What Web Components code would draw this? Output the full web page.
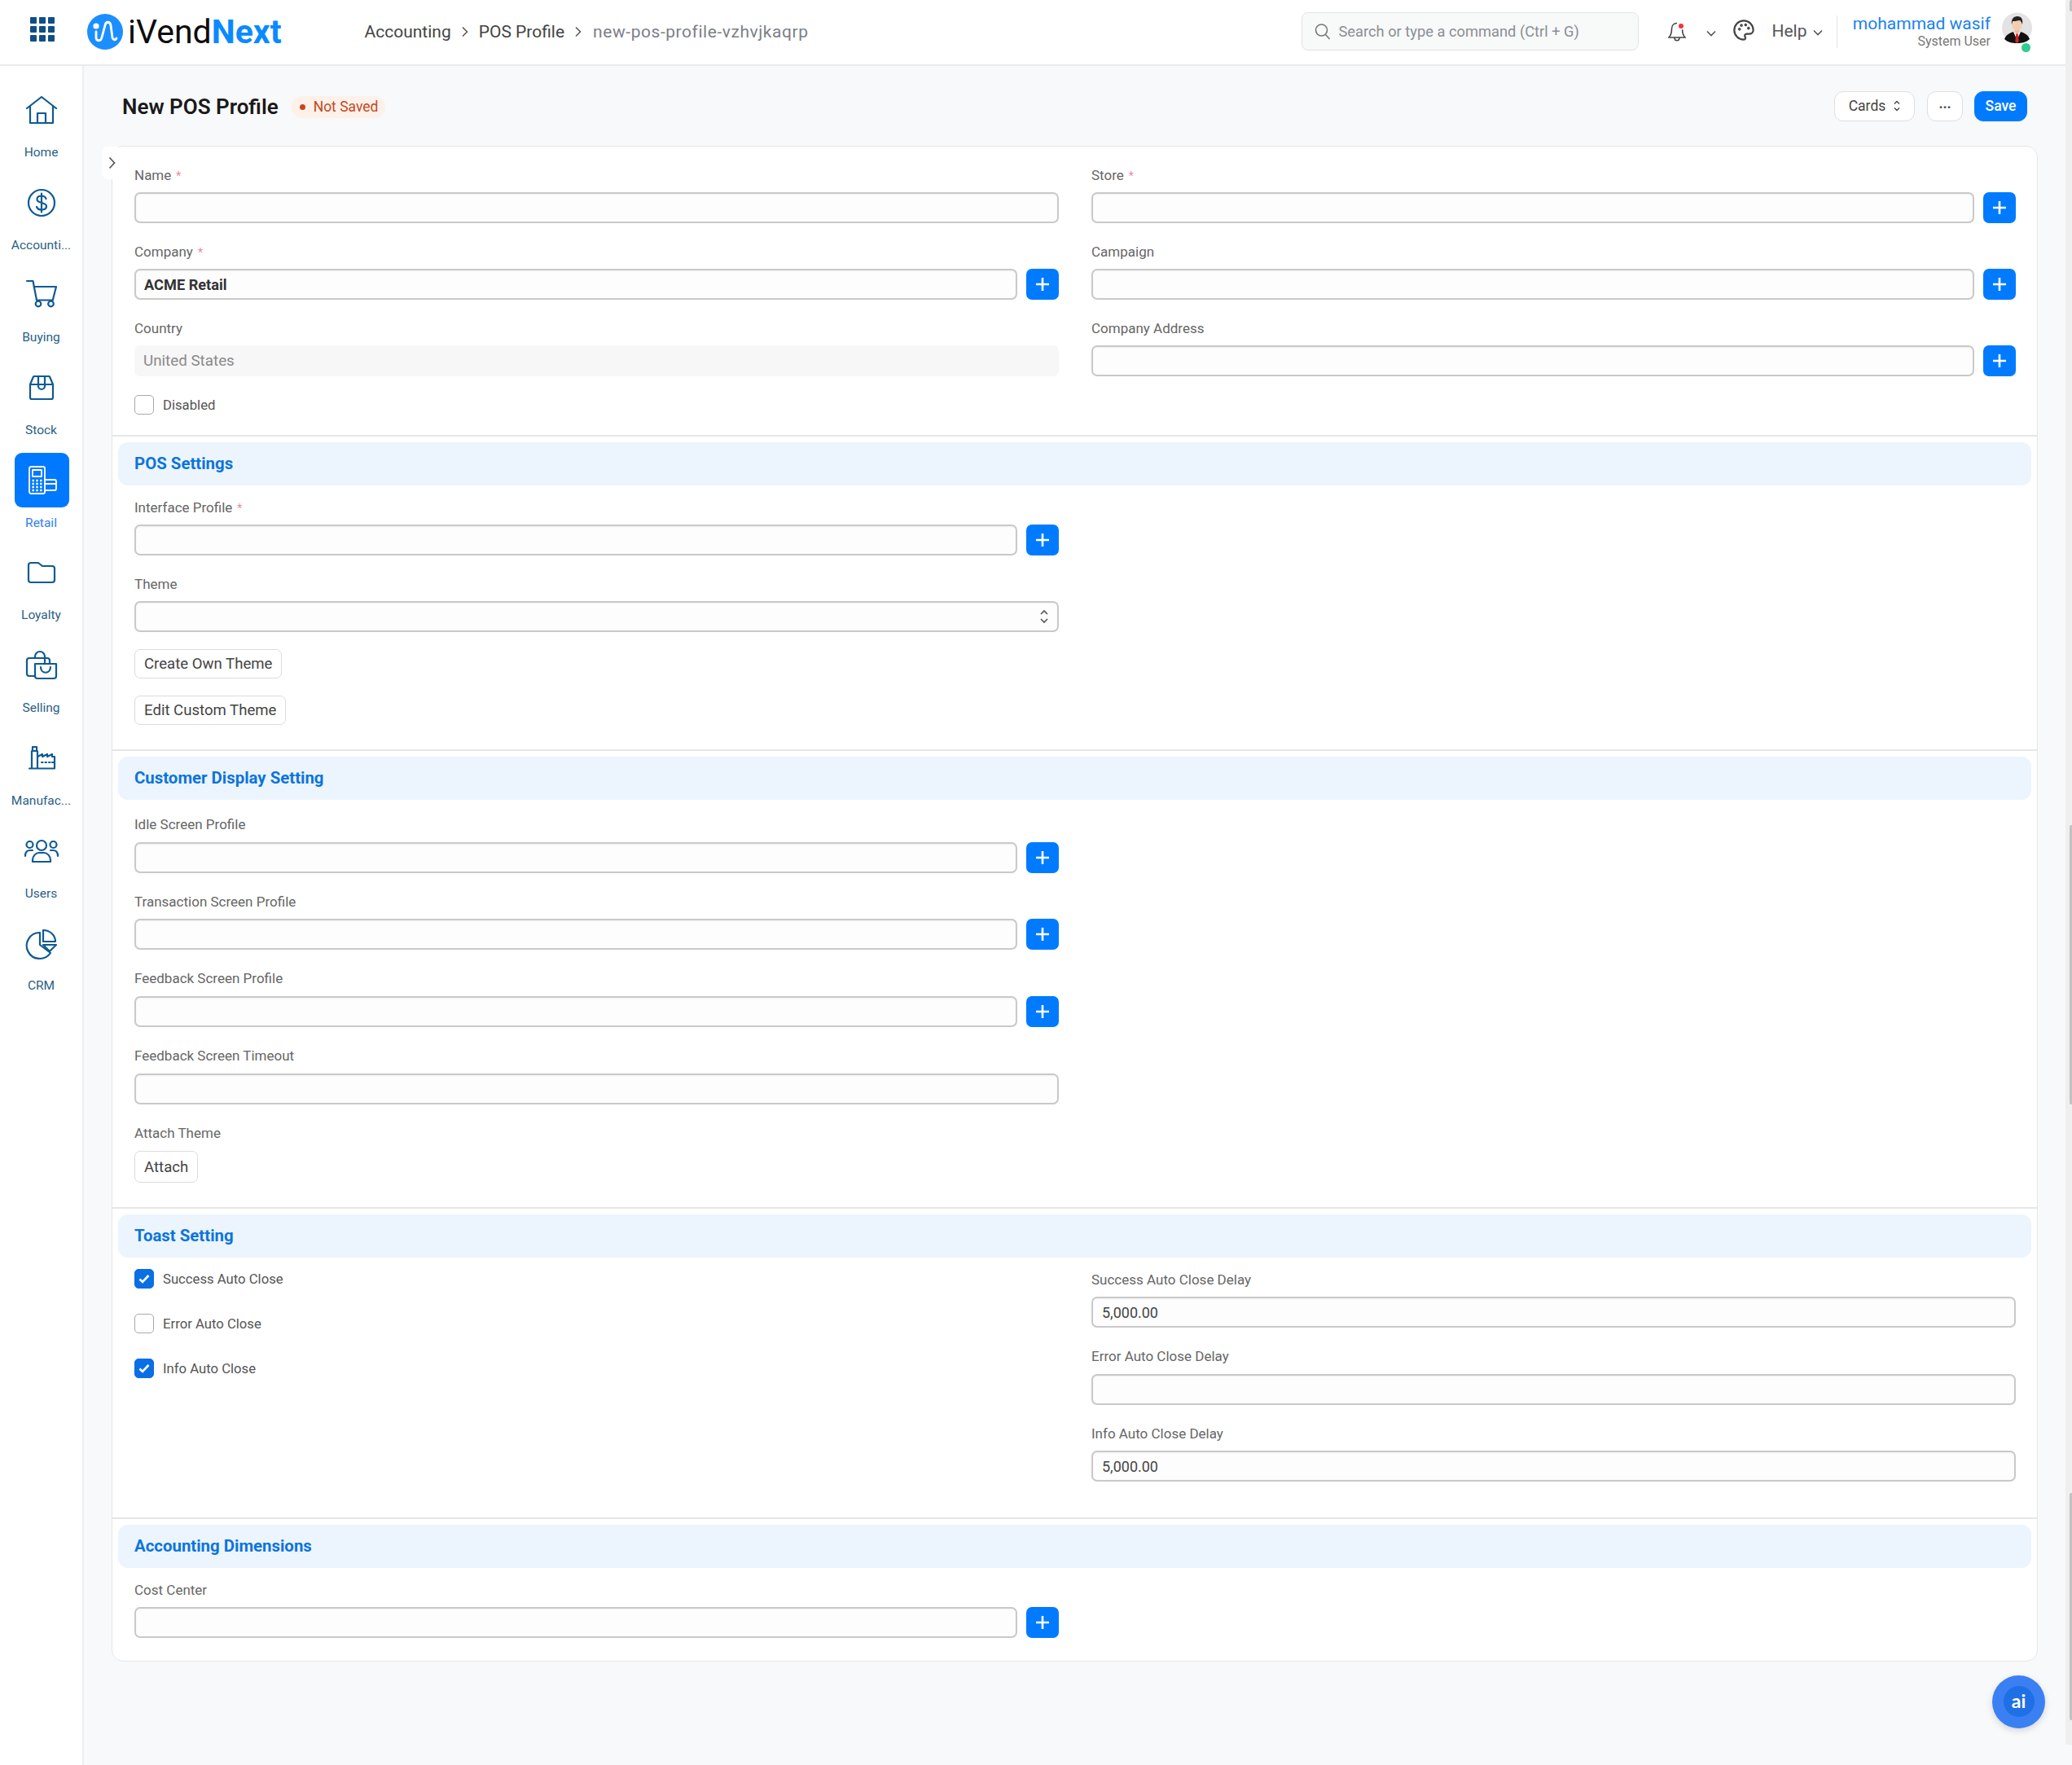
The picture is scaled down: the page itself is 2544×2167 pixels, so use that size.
<!DOCTYPE html>
<html lang="en">
<head>
<meta charset="utf-8">
<title>New POS Profile</title>
<style>
html, body { margin: 0; height: 2167px; overflow: hidden; background: #f8f9fb; }
body { font-family: Roboto, "Liberation Sans", sans-serif; display: flex; }
#app { width: 2536px; display: flex; flex-direction: column; }
#below { display: flex; flex: 1; min-height: 0; }
</style>
</head>
<body>
<div id="app">
  <iv-topbar></iv-topbar>
  <div id="below">
    <iv-sidebar>
      <iv-side-item label="Home"><svg viewBox="0 0 44 44"><path d="M4 20 22 6l18 14M8 17v21h28V17M17 38V26h10v12"/></svg></iv-side-item>
      <iv-side-item label="Accounti..."><svg viewBox="0 0 44 44"><circle cx="22" cy="22" r="16"/><path d="M27.5 17c-1-2.500-3-3.500-5.500-3.500-3 0-5.500 1.500-5.500 4.300 0 5.700 11.500 2.700 11.500 8.500 0 2.800-2.700 4.200-6 4.200-2.700 0-5-1-6-3.500M22 10.500v23"/></svg></iv-side-item>
      <iv-side-item label="Buying"><svg viewBox="0 0 44 44"><path d="M4 5h7.500L16 28.500h20M12.500 12H40l-4 15.500"/><circle cx="18" cy="33" r="3.300"/><circle cx="33.500" cy="33" r="3.300"/></svg></iv-side-item>
      <iv-side-item label="Stock"><svg viewBox="0 0 44 44"><path d="M8 18l4-9.500a1 1 0 0 1 1-.5h18a1 1 0 0 1 1 .5L36 18v16a2 2 0 0 1-2 2H10a2 2 0 0 1-2-2zM8 18h28M18 8v12a4 4 0 0 0 8 0V8"/></svg></iv-side-item>
      <iv-side-item label="Retail" active><svg viewBox="0 0 44 44"><path d="M9 5h15a2 2 0 0 1 2 2v29a2 2 0 0 1-2 2H9a2 2 0 0 1-2-2V7a2 2 0 0 1 2-2zM11 9h11v8H11z"/><path d="M10.500 22h12M10.500 26h12M10.500 30h12M10.500 34h12" stroke-width="2.400" stroke-dasharray="2.400 2.400" stroke-linecap="butt"/><path d="M26 21h12a2 2 0 0 1 2 2v9a2 2 0 0 1-2 2H26M26 26h14"/></svg></iv-side-item>
      <iv-side-item label="Loyalty"><svg viewBox="0 0 44 44"><path d="M6 13a3 3 0 0 1 3-3h9l5 4h12a3 3 0 0 1 3 3v14a3 3 0 0 1-3 3H9a3 3 0 0 1-3-3z"/></svg></iv-side-item>
      <iv-side-item label="Selling"><svg viewBox="0 0 44 44"><path d="M13 35H7a3 3 0 0 1-3-3V16a3 3 0 0 1 3-3h22a3 3 0 0 1 3 3v3M14 13V11a6 6 0 0 1 12 0v8"/><path d="M14 20h26v15a3 3 0 0 1-3 3H17a3 3 0 0 1-3-3zM21 24c0 9 12 9 12 0"/></svg></iv-side-item>
      <iv-side-item label="Manufac..."><svg viewBox="0 0 44 44"><path d="M7 34.500h31M10 34V13h7v21M11 8h5v5h-5zM17 20l6-3v3l6-3v3l6-3v3h3v14M22 27h1.500M26.500 27H28M31 27h1.500M35 27h1.500"/></svg></iv-side-item>
      <iv-side-item label="Users"><svg viewBox="0 0 44 44"><circle cx="22" cy="15" r="6"/><circle cx="7.500" cy="14" r="4"/><circle cx="36.500" cy="14" r="4"/><path d="M11 35v-2c0-5 4-9 8-9h6c4 0 8 4 8 9v2zM2 28c0-4 2-7 6-7h3M42 28c0-4-2-7-6-7h-3"/></svg></iv-side-item>
      <iv-side-item label="CRM"><svg viewBox="0 0 44 44"><path d="M20 9A16 16 0 1 0 33 34L20 24z"/><path d="M24 6c8 0 15 6 15 14H24zM24 24h16l-8 8z"/></svg></iv-side-item>
    </iv-sidebar>
    <iv-main>
      <iv-page-head title="New POS Profile" status="Not Saved"></iv-page-head>
      <iv-form-card>
        <iv-section plain style="--pt:25px;--pb:24.500px">
          <iv-col>
            <iv-field label="Name" required></iv-field>
            <iv-field label="Company" required value="ACME Retail" bold link></iv-field>
            <iv-field label="Country" value="United States" disabled></iv-field>
            <iv-check label="Disabled" style="margin-top:-1.500px"></iv-check>
          </iv-col>
          <iv-col>
            <iv-field label="Store" required link></iv-field>
            <iv-field label="Campaign" link></iv-field>
            <iv-field label="Company Address" link></iv-field>
          </iv-col>
        </iv-section>
        <iv-section title="POS Settings" style="--pt:17px;--pb:30px">
          <iv-col>
            <iv-field label="Interface Profile" required link></iv-field>
            <iv-field label="Theme" select></iv-field>
            <iv-btn style="margin-top:-3.500px">Create Own Theme</iv-btn>
            <iv-btn style="margin-top:21px">Edit Custom Theme</iv-btn>
          </iv-col>
          <iv-col></iv-col>
        </iv-section>
        <iv-section title="Customer Display Setting" style="--pt:20px;--pb:29.500px;--fb:25.200px">
          <iv-col>
            <iv-field label="Idle Screen Profile" link></iv-field>
            <iv-field label="Transaction Screen Profile" link></iv-field>
            <iv-field label="Feedback Screen Profile" link></iv-field>
            <iv-field label="Feedback Screen Timeout"></iv-field>
            <iv-field-label>Attach Theme</iv-field-label>
            <iv-btn style="--h:39px;margin-top:1px">Attach</iv-btn>
          </iv-col>
          <iv-col></iv-col>
        </iv-section>
        <iv-section title="Toast Setting" style="--pt:17px;--pb:19px;--fb:25px">
          <iv-col style="gap:31px">
            <iv-check label="Success Auto Close" checked style="margin-top:-2.500px"></iv-check>
            <iv-check label="Error Auto Close"></iv-check>
            <iv-check label="Info Auto Close" checked></iv-check>
          </iv-col>
          <iv-col>
            <iv-field label="Success Auto Close Delay" value="5,000.00"></iv-field>
            <iv-field label="Error Auto Close Delay"></iv-field>
            <iv-field label="Info Auto Close Delay" value="5,000.00"></iv-field>
          </iv-col>
        </iv-section>
        <iv-section title="Accounting Dimensions" style="--pt:16.500px;--pb:3px">
          <iv-col>
            <iv-field label="Cost Center" link></iv-field>
          </iv-col>
          <iv-col></iv-col>
        </iv-section>
      </iv-form-card>
      <iv-fab></iv-fab>
    </iv-main>
  </div>
</div>
<iv-scrollbar></iv-scrollbar>

<script>
class IvTopbar extends HTMLElement {
    constructor() {
        super();
        this.attachShadow({ mode: 'open' });
        this.shadowRoot.innerHTML = `
            <style>
            :host { display: flex; align-items: center; height: 79px; flex: none; background: #fff; border-bottom: 2px solid #e9eaec; padding: 0 41px 0 37px; color: #444; }
            svg { display: block; flex: none; }
            .grid { display: grid; grid-template-columns: repeat(3, 8px); gap: 3px; margin-top: -7px; }
            .grid i { width: 8px; height: 8px; background: #0f4f86; border-radius: 1px; }
            .logo { display: flex; align-items: center; margin-left: 40px; font-size: 41px; line-height: 44px; color: #0d0d0d; margin-top: -2px; }
            .logo span { margin-left: 6px; }
            .logo b { color: #0a8aff; font-weight: 700; }
            .crumbs { display: flex; align-items: center; margin-left: 102px; font-size: 21px; color: #444; margin-top: -1px; }
            .crumbs svg { margin: 0 13px; }
            .crumbs .last { color: #7b8087; letter-spacing: .55px; margin-left: 1px; }
            .search { margin-left: auto; width: 414px; height: 47px; box-sizing: border-box; border: 1.5px solid #e3e4e5; border-radius: 8px; background: #f8f9f9; display: flex; align-items: center; padding-left: 15px; font-size: 18.300px; color: #8a8f94; margin-top: -2px; }
            .search svg { margin-right: 10px; }
            .help { width: 42px; margin-left: 20.500px; font-size: 21px; color: #555; margin-top: -4px; }
            .sep { width: 1.5px; height: 40px; background: #e4e4e4; margin-left: 17px; margin-top: -2px; }
            .user { width: 170px; margin-left: 18px; text-align: right; margin-top: -2px; }
            .user div { font-size: 21px; line-height: 24px; color: #1a82f0; white-space: nowrap; }
            .user small { display: block; font-size: 16px; line-height: 20px; color: #777; white-space: nowrap; }
            .avatar { position: relative; margin-left: 14px; width: 37px; height: 38px; margin-top: -12px; }
            .avatar i { position: absolute; right: 2px; bottom: -11px; width: 11px; height: 11px; border-radius: 50%; background: #2ecc8f; }
            </style>
            <div class="grid"><i></i><i></i><i></i><i></i><i></i><i></i><i></i><i></i><i></i></div>
            <div class="logo">
                <svg width="44" height="44" viewBox="0 0 44 44"><circle cx="22" cy="22" r="22" fill="#1b8fff"/><circle cx="11" cy="15" r="3.600" fill="#fff"/><path d="M11 22v7c0 5 6 5 7 0l4-15c1-5 6-5 7 0l2 15c1 4 4 3 5 1" fill="none" stroke="#fff" stroke-width="2.800" stroke-linecap="round"/></svg>
                <span>iVend<b>Next</b></span>
            </div>
            <div class="crumbs">
                <span>Accounting</span>
                <svg width="8" height="14" viewBox="0 0 8 14"><path d="M1 1.500 6.500 7 1 12.500" fill="none" stroke="#555" stroke-width="1.500"/></svg>
                <span>POS Profile</span>
                <svg width="8" height="14" viewBox="0 0 8 14"><path d="M1 1.500 6.500 7 1 12.500" fill="none" stroke="#555" stroke-width="1.500"/></svg>
                <span class="last">new-pos-profile-vzhvjkaqrp</span>
            </div>
            <div class="search">
                <svg width="20" height="22" viewBox="0 0 20 22"><circle cx="8.500" cy="9" r="7" fill="none" stroke="#777" stroke-width="1.600"/><path d="M13.500 14.500 18.500 20" stroke="#777" stroke-width="1.600"/></svg>
                <span>Search or type a command (Ctrl + G)</span>
            </div>
            <svg style="margin-left:36.500px;margin-top:-2px" width="22" height="24" viewBox="0 0 22 24"><path d="M11 1.500c-4 0-6.500 3-6.500 7 0 6-2 9-3.500 10.500h20c-1.500-1.500-3.500-4.500-3.500-10.500M8 19c0 5 6 5 6 0" fill="none" stroke="#444" stroke-width="1.600"/><circle cx="16" cy="5" r="4.500" fill="#fff"/><circle cx="16" cy="5" r="3" fill="#f0353b"/></svg>
            <svg style="margin-left:25px;margin-top:2px" width="12" height="8" viewBox="0 0 12 8"><path d="M1 1.500 6 6.500 11 1.500" fill="none" stroke="#555" stroke-width="1.600"/></svg>
            <svg style="margin-left:20px;margin-top:-6px" width="28" height="28" viewBox="0 0 24 24" fill="none" stroke="#444" stroke-width="1.900"><path d="M12 22a10 10 0 1 1 10-10c0 2.500-2 4-4.500 4H15a2 2 0 0 0-1.500 3.300c.6.700.3 2.700-1.500 2.700z"/><circle cx="7.500" cy="11" r=".6" fill="#444"/><circle cx="9.500" cy="7" r=".6" fill="#444"/><circle cx="14" cy="6.500" r=".6" fill="#444"/><circle cx="17" cy="10" r=".6" fill="#444"/></svg>
            <div class="help">Help</div>
            <svg style="margin-left:8px;margin-top:1px" width="12" height="8" viewBox="0 0 12 8"><path d="M1 1.500 6 6.500 11 1.500" fill="none" stroke="#555" stroke-width="1.600"/></svg>
            <div class="sep"></div>
            <div class="user"><div>mohammad wasif</div><small>System User</small></div>
            <div class="avatar">
                <svg width="37" height="38" viewBox="0 0 37 38"><circle cx="18.500" cy="19" r="18.500" fill="#e3e3e3"/><path d="M3 33c2-6 8-8 11-9h9c3 1 9 3 11 9-4 4-9 5-15.500 5S7 37 3 33z" fill="#111"/><path d="M14 24l4.500 10 4.500-10z" fill="#fff"/><path d="M17.300 26h2.400l1 10-2.200 2-2.200-2z" fill="#d8232a"/><path d="M15.500 20h6v5l-3 2-3-2z" fill="#eebd9c"/><ellipse cx="18.500" cy="15" rx="6" ry="7.500" fill="#f4cdb0"/><path d="M12 15c-1-6 2-10 7-10s7 4 6 10c-1-3-2-5-4-5-3 1-7 1-8 1z" fill="#222"/></svg>
                <i></i>
            </div>
            `;
    }
}

class IvSidebar extends HTMLElement {
    constructor() {
        super();
        this.attachShadow({ mode: 'open' });
        this.shadowRoot.innerHTML = `
            <style>
            :host { display: block; flex: none; width: 101px; background: #fff; border-right: 2px solid #eceef0; padding-top: 32px; }
            </style>
            <slot></slot>
            `;
    }
}

class IvSideItem extends HTMLElement {
    constructor() {
        super();
        this.attachShadow({ mode: 'open' });
        this.shadowRoot.innerHTML = `
            <style>
            :host { display: flex; flex-direction: column; align-items: center; height: 113.700px; color: #2b5f86; }
            .icon { width: 67px; height: 44px; display: flex; align-items: center; justify-content: center; border-radius: 9px; margin-left: 1px; }
            ::slotted(svg) { width: 44px; height: 44px; fill: none; stroke: #0f5a92; stroke-width: 2.200; stroke-linejoin: round; stroke-linecap: round; }
            :host([active]) { color: #2f80f0; }
            :host([active]) .icon { background: #0078ff; height: 67px; margin-top: -11.500px; margin-bottom: -11.500px; }
            :host([active]) ::slotted(svg) { stroke: #fff; stroke-width: 1.800; }
            .label { margin-top: 20px; font-size: 15.500px; line-height: 20px; white-space: nowrap; }
            </style>
            <div class="icon"><slot></slot></div>
            <div class="label"></div>
            `;
    }
    connectedCallback() {
        this.shadowRoot.querySelector('.label').textContent = this.getAttribute('label');
    }
}

class IvMain extends HTMLElement {
    constructor() {
        super();
        this.attachShadow({ mode: 'open' });
        this.shadowRoot.innerHTML = `
            <style>
            :host { display: block; flex: 1; position: relative; padding: 0 34px 0 34px; }
            </style>
            <slot></slot>
            `;
    }
}

class IvPageHead extends HTMLElement {
    constructor() {
        super();
        this.attachShadow({ mode: 'open' });
        this.shadowRoot.innerHTML = `
            <style>
            :host { display: flex; align-items: center; height: 100px; margin: 0 13px 0 13px; }
            h1 { margin: 0; font-size: 26px; font-weight: 600; color: #1a1a1a; white-space: nowrap; }
            .badge { display: flex; align-items: center; margin-left: 16px; height: 27px; padding: 0 9px 0 10px; border-radius: 13px; background: #fdf1ea; color: #c2491d; font-size: 17.500px; }
            .badge i { width: 7px; height: 7px; border-radius: 50%; background: #c2491d; margin-right: 10px; }
            .btn { display: flex; align-items: center; justify-content: center; height: 37px; box-sizing: border-box; margin-top: -2px; border: 1.500px solid #dfdfdf; border-radius: 11px; background: #fff; font-size: 17.500px; color: #444; }
            .cards { margin-left: auto; width: 99px; gap: 10px; }
            .more { margin-left: 15px; width: 44px; padding-bottom: 7px; font-weight: 700; }
            .save { margin-left: 14px; width: 65px; background: #007bff; border-color: #007bff; color: #fff; font-weight: 500; }
            </style>
            <h1></h1>
            <div class="badge"><i></i><span></span></div>
            <div class="btn cards">Cards <svg width="8" height="14" viewBox="0 0 8 14"><path d="M1 4.500 4 1.500 7 4.500M1 9.500 4 12.500 7 9.500" fill="none" stroke="#444" stroke-width="1.400"/></svg></div>
            <div class="btn more">...</div>
            <div class="btn save">Save</div>
            `;
    }
    connectedCallback() {
        this.shadowRoot.querySelector('h1').textContent = this.getAttribute('title');
        this.shadowRoot.querySelector('.badge span').textContent = this.getAttribute('status');
    }
}

class IvFormCard extends HTMLElement {
    constructor() {
        super();
        this.attachShadow({ mode: 'open' });
        this.shadowRoot.innerHTML = `
            <style>
            :host { display: block; position: relative; box-sizing: border-box; margin-top: -2.500px; background: #fff; border: 1.500px solid #e5e6e7; border-radius: 14px; }
            .tab { position: absolute; left: -13px; top: 0; width: 24px; height: 40px; background: #fff; border-radius: 8px; display: flex; align-items: center; justify-content: center; }
            </style>
            <div class="tab"><svg width="9" height="16" viewBox="0 0 9 16"><path d="M1.500 1.500 7.500 8 1.500 14.500" fill="none" stroke="#555" stroke-width="1.700"/></svg></div>
            <slot></slot>
            `;
    }
}

class IvSection extends HTMLElement {
    constructor() {
        super();
        this.attachShadow({ mode: 'open' });
        this.shadowRoot.innerHTML = `
            <style>
            :host { display: block; border-top: 2px solid #e5e6e7; }
            :host([plain]) { border-top: none; }
            :host([plain]) .head { display: none; }
            .head { margin: 7px 7px 0; height: 53px; line-height: 53px; padding-left: 20px; border-radius: 12px; background: #ecf5fd; color: #0c74dc; font-size: 20.400px; font-weight: 700; }
            .body { display: grid; grid-template-columns: 1fr 1fr; column-gap: 40px; padding: var(--pt, 17px) 26px var(--pb, 20px) 27px; }
            </style>
            <div class="head"></div>
            <div class="body"><slot></slot></div>
            `;
    }
    connectedCallback() {
        this.shadowRoot.querySelector('.head').textContent = this.getAttribute('title');
    }
}

class IvCol extends HTMLElement {
    constructor() {
        super();
        this.attachShadow({ mode: 'open' });
        this.shadowRoot.innerHTML = `
            <style>
            :host { display: flex; flex-direction: column; align-items: stretch; min-width: 0; }
            </style>
            <slot></slot>
            `;
    }
}

class IvFieldLabel extends HTMLElement {
    constructor() {
        super();
        this.attachShadow({ mode: 'open' });
        this.shadowRoot.innerHTML = `
            <style>
            :host { display: block; height: 22px; line-height: 20.500px; margin-bottom: 9.500px; font-size: 17px; color: #666; white-space: nowrap; }
            </style>
            <slot></slot>
            `;
    }
}

class IvField extends HTMLElement {
    constructor() {
        super();
        this.attachShadow({ mode: 'open' });
        this.shadowRoot.innerHTML = `
            <style>
            :host { display: block; margin-bottom: var(--fb, 24.500px); }
            .required { color: #ee8a9a; margin-left: 6px; font-size: 14px; }
            .row { display: flex; gap: 11px; }
            .input { flex: 1; min-width: 0; display: flex; align-items: center; justify-content: space-between; box-sizing: border-box; height: 38px; padding: 0 11px; border: 2px solid #c9c9c9; border-radius: 7px; background: #fdfdfd; box-shadow: inset 0 1px 2px rgba(0,0,0,.05); font-size: 18px; color: #444; }
            :host([disabled]) .input { border-color: transparent; background: #f7f7f7; box-shadow: none; color: #8a8a8a; font-size: 18.800px; padding-left: 9px; }
            :host([bold]) .input { font-weight: 700; color: #333; font-size: 18.200px; padding-left: 10px; }
            .add { flex: none; width: 40px; height: 38px; border-radius: 7px; background: #007bff; display: flex; align-items: center; justify-content: center; }
            </style>
            <iv-field-label><span class="text"></span><span class="required" hidden>*</span></iv-field-label>
            <div class="row"><div class="input"><span class="value"></span></div></div>
            `;
    }
    connectedCallback() {
        const root = this.shadowRoot;
        root.querySelector('.text').textContent = this.getAttribute('label');
        root.querySelector('.value').textContent = this.getAttribute('value') || '';
        root.querySelector('.required').hidden = !this.hasAttribute('required');
        if (this.hasAttribute('select')) {
            root.querySelector('.input').insertAdjacentHTML('beforeend',
                '<svg width="10" height="18" viewBox="0 0 10 18"><path d="M1 6 5 2 9 6M1 12 5 16 9 12" fill="none" stroke="#555" stroke-width="1.600"/></svg>');
        }
        if (this.hasAttribute('link')) {
            root.querySelector('.row').insertAdjacentHTML('beforeend',
                '<div class="add"><svg width="18" height="18" viewBox="0 0 18 18"><path d="M9 1v16M1 9h16" stroke="#fff" stroke-width="2.600"/></svg></div>');
        }
    }
}

class IvCheck extends HTMLElement {
    constructor() {
        super();
        this.attachShadow({ mode: 'open' });
        this.shadowRoot.innerHTML = `
            <style>
            :host { display: flex; align-items: center; height: 24px; font-size: 16.700px; color: #555; white-space: nowrap; }
            .box { width: 24px; height: 24px; box-sizing: border-box; border: 1.500px solid #a9a9a9; border-radius: 5px; background: #fff; margin-right: 11px; display: flex; align-items: center; justify-content: center; }
            :host([checked]) .box { background: #0a6fe3; border-color: #0a6fe3; }
            svg { display: none; }
            :host([checked]) svg { display: block; }
            </style>
            <div class="box"><svg width="14" height="12" viewBox="0 0 14 12"><path d="M1.500 6.500 5 10 12.500 2" fill="none" stroke="#fff" stroke-width="2.600"/></svg></div>
            <span></span>
            `;
    }
    connectedCallback() {
        this.shadowRoot.querySelector('span').textContent = this.getAttribute('label');
    }
}

class IvBtn extends HTMLElement {
    constructor() {
        super();
        this.attachShadow({ mode: 'open' });
        this.shadowRoot.innerHTML = `
            <style>
            :host { display: inline-flex; align-items: center; align-self: flex-start; box-sizing: border-box; height: var(--h, 36px); padding: 0 11px; border: 1.500px solid #dcdcdc; border-radius: 7px; background: #fff; font-size: 18.600px; color: #444; white-space: nowrap; }
            </style>
            <slot></slot>
            `;
    }
}

class IvFab extends HTMLElement {
    constructor() {
        super();
        this.attachShadow({ mode: 'open' });
        this.shadowRoot.innerHTML = `
            <style>
            :host { position: absolute; left: 2343px; top: 1975.500px; width: 65px; height: 65px; border-radius: 50%; background: #3a80f3; display: flex; align-items: center; justify-content: center; box-shadow: 0 3px 8px rgba(0,0,0,.15); }
            div { width: 38px; height: 38px; border-radius: 50%; background: #1f6fe5; color: #fff; display: flex; align-items: center; justify-content: center; font: 700 23px/1 Lato, sans-serif; padding-bottom: 2px; box-sizing: border-box; }
            </style>
            <div>ai</div>
            `;
    }
}

class IvScrollbar extends HTMLElement {
    constructor() {
        super();
        this.attachShadow({ mode: 'open' });
        this.shadowRoot.innerHTML = `
            <style>
            :host { display: block; width: 8px; height: 2142px; background: #efefef; position: relative; }
            i { display: block; position: absolute; right: 0; width: 3.500px; background: #c2c2c2; border-radius: 2px 0 0 2px; }
            </style>
            <i style="top:0;height:14px"></i>
            <i style="top:1013px;height:343px"></i>
            <i style="top:1833px;height:279px"></i>
            `;
    }
}

customElements.define('iv-topbar', IvTopbar);
customElements.define('iv-sidebar', IvSidebar);
customElements.define('iv-side-item', IvSideItem);
customElements.define('iv-main', IvMain);
customElements.define('iv-page-head', IvPageHead);
customElements.define('iv-form-card', IvFormCard);
customElements.define('iv-section', IvSection);
customElements.define('iv-col', IvCol);
customElements.define('iv-field-label', IvFieldLabel);
customElements.define('iv-field', IvField);
customElements.define('iv-check', IvCheck);
customElements.define('iv-btn', IvBtn);
customElements.define('iv-fab', IvFab);
customElements.define('iv-scrollbar', IvScrollbar);
</script>
</body>
</html>
